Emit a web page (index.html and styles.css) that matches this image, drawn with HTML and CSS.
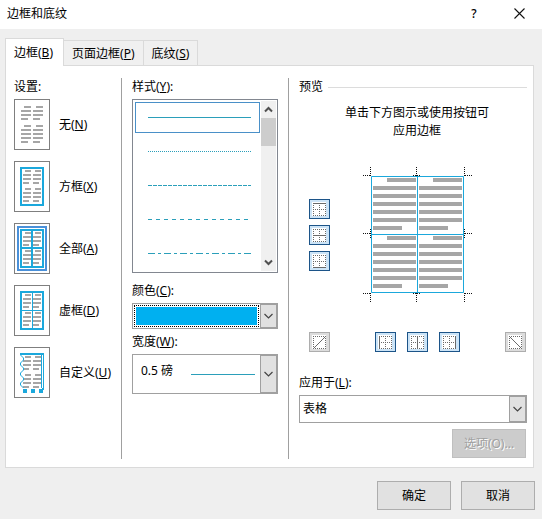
FILE: index.html
```
<!DOCTYPE html>
<html lang="zh-CN">
<head>
<meta charset="UTF-8" />
<meta name="viewport" content="width=device-width, initial-scale=1" />
<title>边框和底纹</title>
<link rel="stylesheet" href="styles.css">
</head>
<body>

<!-- shared icon parts -->
<svg class="defs" width="0" height="0" aria-hidden="true">
  <symbol id="text" viewBox="0 0 34 49">
    <path fill="#a6a6a6" d="M10 8h6v2h-6zM20 8h6v2h-6zM8 12h8v2H8zM18 12h8v2h-8zM8 16h8v2H8zM18 16h8v2h-8zM8 20h6v2H8zM18 20h6v2h-6zM10 26h6v2h-6zM20 26h6v2h-6zM8 30h8v2H8zM18 30h8v2h-8zM8 34h8v2H8zM18 34h8v2h-8zM8 38h6v2H8zM18 38h6v2h-6z"/>
  </symbol>
  <symbol id="grid" viewBox="0 0 19 18">
    <path fill="#fff" d="M2 2h14v14H2z"/>
    <path fill="none" stroke="#6a6a6a" stroke-dasharray="1 1" d="M3 3.5h13M3 15.5h13M3.500 3v13M15.500 3v13"/>
  </symbol>
  <symbol id="cross" viewBox="0 0 19 18">
    <path fill="none" stroke="#6a6a6a" stroke-dasharray="1 1" d="M3 9.500h13M9.500 3v13"/>
  </symbol>
  <symbol id="chevron" viewBox="0 0 9 6">
    <path fill="none" stroke="#444" stroke-width="1.200" d="M.5 1l4 4 4-4"/>
  </symbol>
</svg>

<header class="titlebar">
  <h1>边框和底纹</h1>
  <button class="tb-btn" aria-label="帮助">?</button>
  <button class="tb-btn" aria-label="关闭">
    <svg width="11" height="11" viewBox="0 0 11 11"><path stroke="#111" stroke-width="1.100" d="M.5.5l10 10M10.500.5l-10 10"/></svg>
  </button>
</header>

<main>
  <div class="tabs" role="tablist">
    <button class="tab active" role="tab" aria-selected="true">边框(<u>B</u>)</button>
    <button class="tab" role="tab">页面边框(<u>P</u>)</button>
    <button class="tab" role="tab">底纹(<u>S</u>)</button>
  </div>

  <div class="panel">
    <section class="col settings">
      <h2>设置:</h2>
      <div class="setting">
        <button id="setNone">
          <svg width="34" height="49" viewBox="0 0 34 49"><path fill="#a6a6a6" d="M9 6h7v2H9zM21 6h7v2h-7zM6 10h10v2H6zM18 10h10v2H18zM6 14h10v2H6zM18 14h10v2H18zM6 18h7v2H6zM18 18h7v2h-7zM9 25h7v2H9zM21 25h7v2h-7zM6 29h10v2H6zM18 29h10v2H18zM6 33h10v2H6zM18 33h10v2H18zM6 37h10v2H6zM18 37h10v2H18zM6 41h7v2H6zM18 41h7v2h-7z"/></svg>
        </button>
        <label for="setNone">无(<u>N</u>)</label>
      </div>
      <div class="setting">
        <button id="setBox">
          <svg width="34" height="49"><use href="#text"/><path class="line2" d="M6 6h22v37H6z"/></svg>
        </button>
        <label for="setBox">方框(<u>X</u>)</label>
      </div>
      <div class="setting">
        <button id="setAll" aria-pressed="true">
          <svg width="34" height="49"><use href="#text"/><path fill="none" stroke="#4a90d9" stroke-width="2" d="M3 3h28v43H3z"/><path class="line2" d="M6 6h22v37H6zM17 6v37M6 24h22"/></svg>
        </button>
        <label for="setAll">全部(<u>A</u>)</label>
      </div>
      <div class="setting">
        <button id="setGrid">
          <svg width="34" height="49"><use href="#text"/><path class="line2" d="M6 6h22v37H6z"/><path class="line1" d="M17.500 6v37M6 24.500h22"/></svg>
        </button>
        <label for="setGrid">虚框(<u>D</u>)</label>
      </div>
      <div class="setting">
        <button id="setCustom">
          <svg width="34" height="49"><use href="#text"/><path class="line2" d="M5 6h24"/><path class="line1" d="M26.500 7v33M28.500 7v33M5.500 7l3 3v2l-3 3v2l3 3v2l-3 3v2l3 3v2l-3 3v2l3 3"/><path fill="#1ba8dc" d="M8 41h4v4H8zM16 41h4v4h-4zM24 41h3v-1h2v2h-1v3h-4z"/></svg>
        </button>
        <label for="setCustom">自定义(<u>U</u>)</label>
      </div>
    </section>

    <section class="col styles">
      <h2 id="styleLabel">样式(<u>Y</u>):</h2>
      <div class="listbox">
        <div class="items" role="radiogroup" aria-labelledby="styleLabel">
          <label class="item"><input type="radio" name="style" aria-label="实线" checked><span class="rule"></span></label>
          <label class="item"><input type="radio" name="style" aria-label="点线"><span class="rule dots"></span></label>
          <label class="item"><input type="radio" name="style" aria-label="短虚线"><span class="rule short"></span></label>
          <label class="item"><input type="radio" name="style" aria-label="虚线"><span class="rule dash"></span></label>
          <label class="item"><input type="radio" name="style" aria-label="点划线"><span class="rule dashdot"></span></label>
        </div>
        <div class="scrollbar">
          <button aria-label="向上"><svg width="9" height="7" viewBox="0 0 9 7"><path fill="none" stroke="#505050" stroke-width="2" d="M1 5.500L4.500 2 8 5.500"/></svg></button>
          <div class="thumb"></div>
          <button aria-label="向下"><svg width="9" height="7" viewBox="0 0 9 7"><path fill="none" stroke="#505050" stroke-width="2" d="M1 1.500L4.500 5 8 1.500"/></svg></button>
        </div>
      </div>

      <label class="caption" for="color">颜色(<u>C</u>):</label>
      <div class="combo color">
        <select id="color"><option aria-label="蓝色"></option></select>
        <span class="arrow"><svg width="9" height="6"><use href="#chevron"/></svg></span>
      </div>

      <label class="caption tight" for="width">宽度(<u>W</u>):</label>
      <div class="combo width">
        <select id="width"><option>0.5 磅</option></select>
        <span class="sample"></span>
        <span class="arrow"><svg width="9" height="6"><use href="#chevron"/></svg></span>
      </div>
    </section>

    <section class="col preview">
      <h2 class="ruled">预览</h2>
      <p>单击下方图示或使用按钮可<br>应用边框</p>

      <div class="board">
        <div class="side">
          <button class="edge" aria-label="上框线"><svg width="19" height="18"><use href="#grid"/><use href="#cross"/><path class="on" d="M3 3.500h13"/></svg></button>
          <button class="edge" aria-label="内部横框线"><svg width="19" height="18"><use href="#grid"/><use href="#cross"/><path class="on" d="M3 9.500h13"/></svg></button>
          <button class="edge" aria-label="下框线"><svg width="19" height="18"><use href="#grid"/><use href="#cross"/><path class="on" d="M3 15.500h13"/></svg></button>
        </div>
        <svg class="page" width="109" height="136" viewBox="0 0 109 136">
          <defs>
            <path id="cell" fill="#a6a6a6" d="M24 11h29v4H24zM10 19h43v4H10zM10 27h43v4H10zM10 35h43v4H10zM10 43h43v4H10zM10 51h43v4H10zM10 59h29v4H10z"/>
          </defs>
          <use href="#cell"/><use href="#cell" x="46"/>
          <use href="#cell" y="58"/><use href="#cell" x="46" y="58"/>
          <path fill="none" stroke="#111" stroke-dasharray="1 1" d="M7.500 0v9M0 8.500h8M53.500 0v9M50 8.500h8M101.500 0v9M102 8.500h8M0 66.500h8M7.500 62v10M102 66.500h8M101.500 62v10M0 126.500h8M7.500 126v10M50 126.500h8M53.500 126v10M102 126.500h8M101.500 126v10"/>
          <path class="line1" d="M8.500 9.500h92v116h-92zM54.500 9.500v116M8.500 67.500h92"/>
        </svg>
        <button class="edge off up" aria-label="斜上框线" disabled><svg width="19" height="18"><use href="#grid"/><path class="on" d="M4 15L15 4"/></svg></button>
        <div class="bottom">
          <button class="edge" aria-label="左框线"><svg width="19" height="18"><use href="#grid"/><use href="#cross"/><path class="on" d="M3.500 3v13"/></svg></button>
          <button class="edge" aria-label="内部竖框线"><svg width="19" height="18"><use href="#grid"/><use href="#cross"/><path class="on" d="M9.500 3v13"/></svg></button>
          <button class="edge" aria-label="右框线"><svg width="19" height="18"><use href="#grid"/><use href="#cross"/><path class="on" d="M15.500 3v13"/></svg></button>
        </div>
        <button class="edge off" aria-label="斜下框线" disabled><svg width="19" height="18"><use href="#grid"/><path class="on" d="M4 4l11 11"/></svg></button>
      </div>

      <label class="caption apply" for="apply">应用于(<u>L</u>):</label>
      <div class="combo target">
        <select id="apply"><option>表格</option></select>
        <span class="arrow"><svg width="9" height="6"><use href="#chevron"/></svg></span>
      </div>
      <button class="btn options" disabled>选项(O)...</button>
    </section>
  </div>
</main>

<footer>
  <button class="btn">确定</button>
  <button class="btn">取消</button>
</footer>

</body>
</html>
```

FILE: styles.css
```
* {
  margin: 0;
  padding: 0;
  box-sizing: border-box;
}
body {
  min-height: 100vh;
  background: #efefef;
  color: #000;
  font: 12px/18px "Noto Sans", "Noto Sans CJK SC", sans-serif;
}
button, select, input {
  font: inherit;
  color: inherit;
}
svg {
  display: block;
}
.defs {
  position: absolute;
}
h1, h2 {
  font-size: 12px;
  font-weight: normal;
}
u {
  text-underline-offset: 1px;
}

/* Title bar */
.titlebar {
  display: flex;
  align-items: center;
  height: 29px;
  padding: 0 8px 2px 7px;
  background: #fff;
}
.titlebar h1 {
  flex: 1;
}
.tb-btn {
  display: flex;
  align-items: center;
  justify-content: center;
  width: 30px;
  height: 26px;
  border: 0;
  background: none;
  font-weight: 500;
}
.tb-btn + .tb-btn {
  margin-left: 15px;
}

/* Tabs */
main {
  padding: 9px 8px 0 5px;
}
.tabs {
  display: flex;
  align-items: flex-end;
  height: 28px;
}
.tab {
  height: 26px;
  padding: 1px 8px 0;
  border: 1px solid #dadada;
  border-left: 0;
  background: #f0f0f0;
}
.tab.active {
  position: relative;
  height: 28px;
  padding: 0 10px 0 8px;
  border: 1px solid #dadada;
  border-bottom: 0;
  background: #fff;
}
.panel {
  display: flex;
  margin-top: -1px;
  padding: 12px 6px 8px 8px;
  border: 1px solid #dadada;
  background: #fff;
}
.col {
  display: flex;
  flex-direction: column;
  height: 381px;
}
.col h2, .caption {
  height: 18px;
  margin-bottom: 3px;
}
.line1 {
  fill: none;
  stroke: #1ba8dc;
}
.line2 {
  fill: none;
  stroke: #1ba8dc;
  stroke-width: 2;
}

/* Settings */
.settings {
  width: 108px;
  border-right: 1px solid #a0a0a0;
}
.setting {
  display: flex;
  align-items: center;
  gap: 9px;
  margin-bottom: 11px;
  white-space: nowrap;
}
.setting button {
  width: 36px;
  height: 51px;
  border: 1px solid #7f7f7f;
  background: #fff;
}

/* Line style, colour, width */
.styles {
  width: 167px;
  padding: 0 10px;
  border-right: 1px solid #a0a0a0;
}
.listbox {
  display: flex;
  height: 174px;
  padding: 1px;
  border: 1px solid #828790;
}
.items {
  flex: 1;
  padding: 1px;
}
.item {
  display: flex;
  align-items: center;
  height: 31px;
  margin-bottom: 3px;
  padding: 0 8px 0 12px;
  border: 1px solid transparent;
}
.item:has(:checked) {
  border-color: #4a90c8;
}
.item input {
  position: absolute;
  opacity: 0;
}
.rule {
  flex: 1;
  height: 1px;
  background: #2b9fba;
}
.rule.dots {
  background: repeating-linear-gradient(90deg, #2b9fba 0 1px, transparent 1px 2px);
}
.rule.short {
  background: repeating-linear-gradient(90deg, #2b9fba 0 4px, transparent 4px 5px);
}
.rule.dash {
  background: repeating-linear-gradient(90deg, #2b9fba 0 4px, transparent 4px 8px);
}
.rule.dashdot {
  background: repeating-linear-gradient(90deg, #2b9fba 0 7px, transparent 7px 10px, #2b9fba 10px 13px, transparent 13px 16px);
}
.scrollbar {
  display: flex;
  flex-direction: column;
  width: 15px;
  background: #f0f0f0;
}
.scrollbar button {
  display: flex;
  align-items: center;
  justify-content: center;
  height: 17px;
  border: 0;
  background: none;
}
.scrollbar button:last-child {
  margin-top: auto;
}
.thumb {
  height: 28px;
  background: #cdcdcd;
}
.caption {
  margin-top: 9px;
}
.caption.tight {
  margin-top: 4px;
}

/* Drop-downs */
.combo {
  position: relative;
  display: flex;
  border: 1px solid #a0a0a0;
  background: #fff;
}
.combo select {
  flex: 1;
  appearance: none;
  border: 0;
  background: none;
  outline: none;
}
.arrow {
  display: flex;
  align-items: center;
  justify-content: center;
  width: 17px;
  border: 1px solid #a0a0a0;
  background: #e1e1e1;
  pointer-events: none;
}
.color {
  height: 26px;
}
.color select {
  margin: 1px;
  padding: 1px;
  border: 1px dotted #000;
  background: #00b0f0 content-box;
}
.width {
  height: 40px;
}
.width select {
  padding: 0 0 6px 8px;
}
.sample {
  align-self: center;
  width: 64px;
  height: 1px;
  margin-right: 5px;
  background: #2b9fba;
}

/* Preview */
.preview {
  flex: 1;
  padding-left: 10px;
}
.ruled {
  display: flex;
  align-items: center;
  gap: 5px;
}
.ruled::after {
  content: "";
  flex: 1;
  height: 1px;
  background: #dcdcdc;
}
.preview p {
  margin: 5px 0 27px;
  padding-left: 8px;
  text-align: center;
}
.board {
  display: grid;
  grid-template-columns: 21px 1fr 21px;
  row-gap: 29px;
  padding: 0 1px 0 10px;
}
.side {
  display: flex;
  flex-direction: column;
  justify-content: center;
  gap: 6px;
}
.page {
  justify-self: center;
}
.up {
  grid-column: 1;
}
.bottom {
  display: flex;
  justify-content: center;
  gap: 11px;
}
.edge {
  width: 21px;
  height: 20px;
  border: 1px solid #1c5488;
  background: #cce4f7;
}
.edge.off {
  border-color: #adadad;
  background: #dcdcdc;
}
.on {
  fill: none;
  stroke: #6a6a6a;
}
.apply {
  margin-top: 22px;
}
.target {
  height: 28px;
}
.target select {
  padding-left: 3px;
}

/* Buttons */
.btn {
  width: 74px;
  height: 29px;
  border: 1px solid #adadad;
  background: #e1e1e1;
}
.options {
  align-self: flex-end;
  margin: 6px 1px 0 0;
  border-color: #bfbfbf;
  background: #ccc;
  color: #a0a0a0;
  text-shadow: 1px 1px 0 #fff;
}
footer {
  display: flex;
  justify-content: flex-end;
  gap: 10px;
  padding: 13px 7px 9px;
}
```
